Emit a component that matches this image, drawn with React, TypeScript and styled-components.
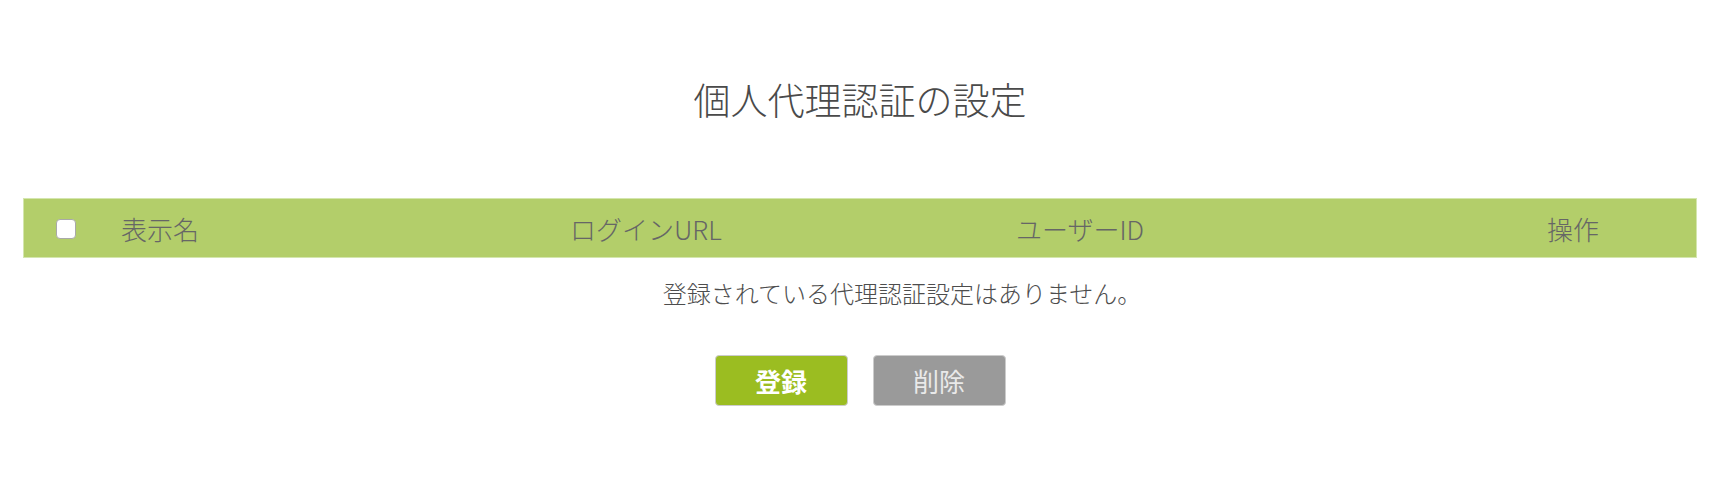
import { useState } from "react";
import styled, { createGlobalStyle } from "styled-components";

const GlobalStyle = createGlobalStyle`
  html, body {
    margin: 0;
    padding: 0;
    background: #ffffff;
  }
  body {
    font-family: "Noto Sans CJK JP", "Noto Sans", sans-serif;
    color: #555555;
  }
`;

const Page = styled.div`
  box-sizing: border-box;
  width: 1720px;
  padding: 72px 23px 0;
`;

const Title = styled.h1`
  margin: 0;
  font-size: 37px;
  font-weight: 300;
  line-height: 55px;
  text-align: center;
  color: #4a4a4a;
`;

const Table = styled.div`
  margin-top: 71px;
  display: grid;
  grid-template-columns: 84px 449px 446px 531px 1fr;
`;

const HeaderRow = styled.div`
  display: contents;
`;

const HeaderCell = styled.div<{ $first?: boolean; $last?: boolean }>`
  box-sizing: border-box;
  height: 60px;
  display: flex;
  align-items: center;
  justify-content: ${(p) => (p.$first ? "center" : "flex-start")};
  padding-left: ${(p) => (p.$first ? "0" : "14px")};
  background: #b3ce6a;
  border-top: 1px solid #d4e6ae;
  border-bottom: 1px solid #d4e6ae;
  border-left: ${(p) => (p.$first ? "1px solid #d4e6ae" : "none")};
  border-right: ${(p) => (p.$last ? "1px solid #d4e6ae" : "none")};
  font-size: 26px;
  font-weight: 300;
  color: #666666;
`;

const CheckBox = styled.input.attrs({ type: "checkbox" })`
  appearance: none;
  margin: 2px 0 0 0;
  width: 20px;
  height: 20px;
  box-sizing: border-box;
  background: #ffffff;
  border: 1px solid #a9a9a9;
  border-radius: 4px;
  cursor: pointer;

  &:checked {
    background: #ffffff
      url("data:image/svg+xml;utf8,<svg xmlns='http://www.w3.org/2000/svg' viewBox='0 0 20 20'><path d='M4 10l4 4 8-8' fill='none' stroke='%23555' stroke-width='2.5'/></svg>")
      center / 16px no-repeat;
  }
`;

const EmptyCell = styled.div`
  grid-column: 2 / -1;
  height: 68px;
  display: flex;
  align-items: center;
  justify-content: center;
  font-size: 24px;
  font-weight: 300;
  color: #4d4d4d;
`;

const ButtonBar = styled.div`
  margin-top: 29px;
  display: flex;
  justify-content: center;
  gap: 25px;
`;

const ActionButton = styled.button<{ $variant: "primary" | "disabled" }>`
  box-sizing: border-box;
  width: 133px;
  height: 51px;
  border: 1px solid #cccccc;
  border-radius: 4px;
  background: ${(p) => (p.$variant === "primary" ? "#9bbd21" : "#9a9a9a")};
  color: ${(p) => (p.$variant === "primary" ? "#ffffff" : "#e9e9e9")};
  font-family: "Noto Sans CJK JP", sans-serif;
  font-size: 26px;
  font-weight: ${(p) => (p.$variant === "primary" ? 700 : 400)};
  line-height: 1;
  padding: 0;
  cursor: ${(p) => (p.$variant === "primary" ? "pointer" : "default")};
`;

const columns = ["表示名", "ログインURL", "ユーザーID", "操作"];

const App = () => {
  const [allChecked, setAllChecked] = useState<boolean>(false);

  return (
    <>
      <GlobalStyle />
      <Page>
        <Title>個人代理認証の設定</Title>

        <Table>
          <HeaderRow>
            <HeaderCell $first>
              <CheckBox
                checked={allChecked}
                onChange={(event) => setAllChecked(event.target.checked)}
              />
            </HeaderCell>
            {columns.map((col, i) => (
              <HeaderCell key={col} $last={i === columns.length - 1}>
                {col}
              </HeaderCell>
            ))}
          </HeaderRow>
          <EmptyCell>登録されている代理認証設定はありません。</EmptyCell>
        </Table>

        <ButtonBar>
          <ActionButton $variant="primary">登録</ActionButton>
          <ActionButton $variant="disabled">削除</ActionButton>
        </ButtonBar>
      </Page>
    </>
  );
};

export default App;
